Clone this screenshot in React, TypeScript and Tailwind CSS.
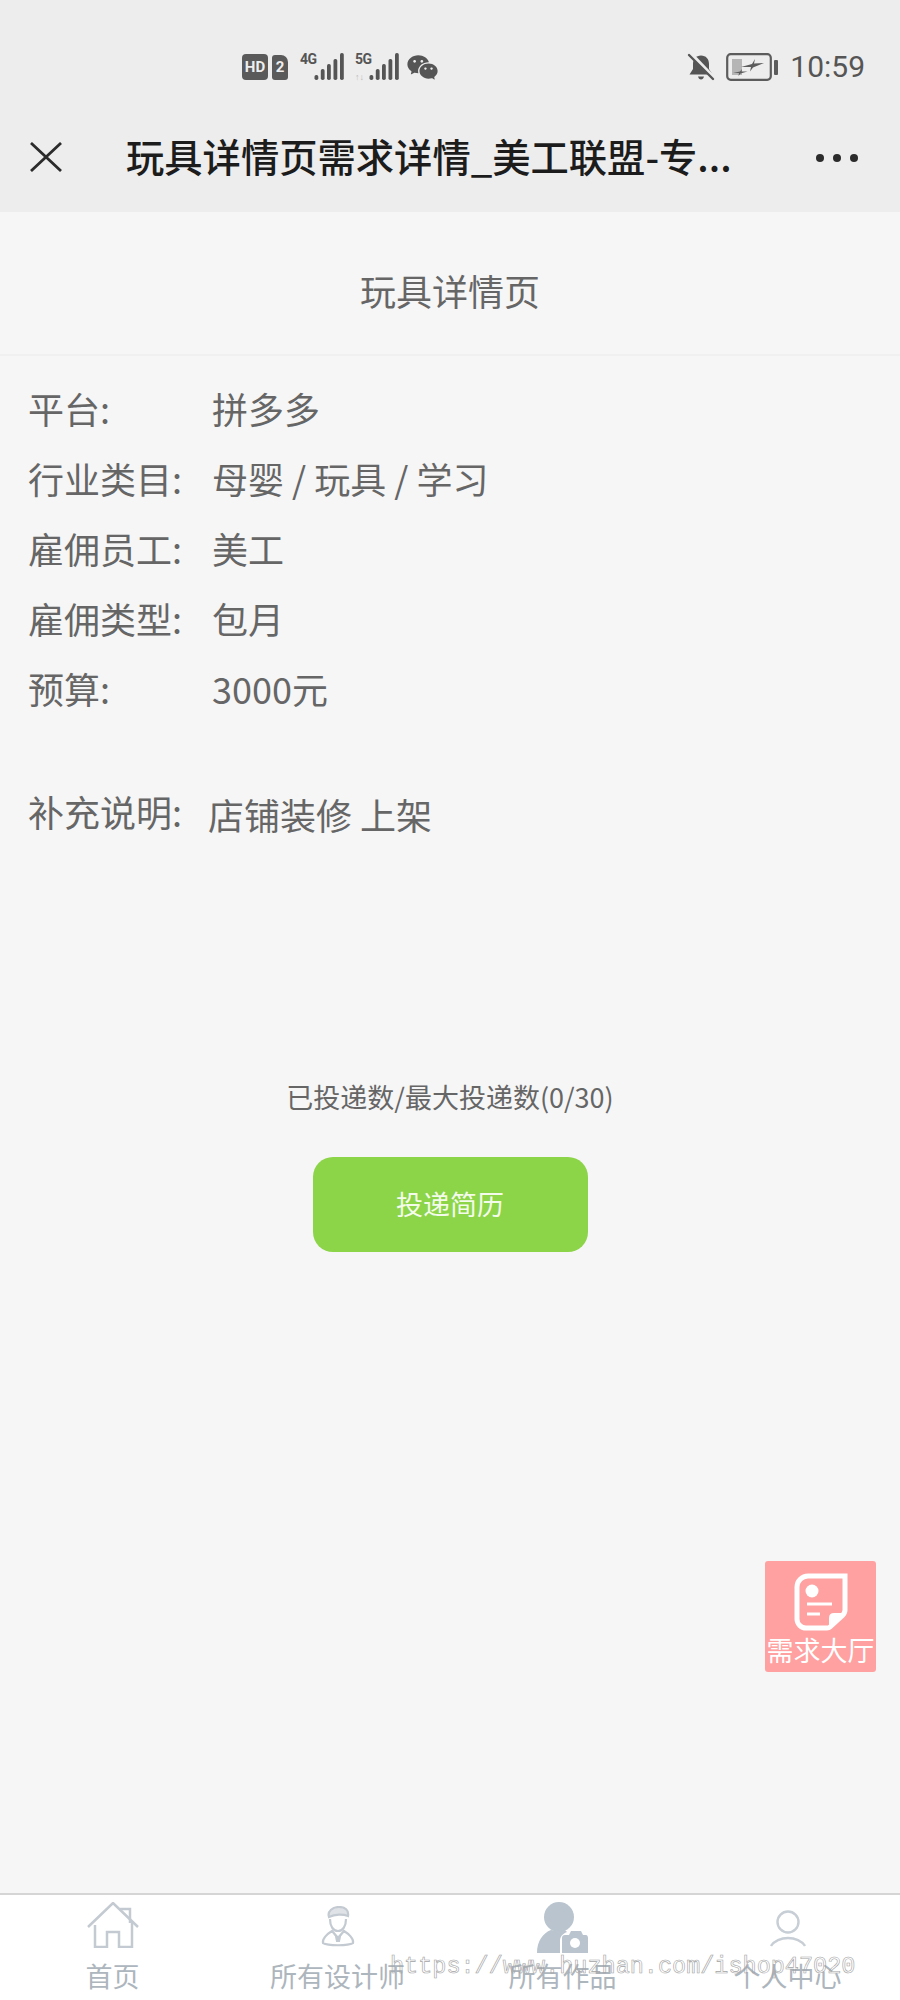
import { RiWechatFill } from "react-icons/ri";

const cjk = "font-['Noto_Sans_CJK_SC','Noto_Sans',sans-serif]";

const rows = [
  { label: "平台:", value: "拼多多" },
  { label: "行业类目:", value: "母婴 / 玩具 / 学习" },
  { label: "雇佣员工:", value: "美工" },
  { label: "雇佣类型:", value: "包月" },
  { label: "预算:", value: "3000元" },
];

function Signal({ tag, arrows }: { tag: string; arrows?: boolean }) {
  return (
    <div className="relative h-[28px] w-[44px]">
      <span className="absolute left-0 top-[-2px] font-['Roboto',sans-serif] text-[14px] font-bold leading-[16px] tracking-[-0.5px] text-[#555]">
        {tag}
      </span>
      {arrows && <span className="absolute bottom-[-1px] left-0 font-['Roboto',sans-serif] text-[9px] font-bold leading-[10px] text-[#bbb]">↑↓</span>}
      <svg className="absolute right-0 top-0" width="30" height="28" viewBox="0 0 30 28" fill="#555">
        <rect x="0.500" y="22" width="3.800" height="5" rx="1.700" />
        <rect x="6.800" y="16" width="3.800" height="11" rx="1.700" />
        <rect x="13" y="11" width="3.800" height="16" rx="1.700" />
        <rect x="19.500" y="6" width="3.800" height="21" rx="1.700" />
        <rect x="26" y="0" width="3.800" height="27" rx="1.700" />
      </svg>
    </div>
  );
}

function StatusBar() {
  return (
    <div className="flex h-[102px] items-center pl-[242px] pr-[35px] pt-[32px] text-[#555]">
      <div className="flex h-[26px] w-[26px] items-center justify-center rounded-[4px] bg-[#5a5a5a] font-['Roboto',sans-serif] text-[15px] font-bold leading-none text-[#eee]">
        HD
      </div>
      <div className="ml-[4px] flex h-[25px] w-[16px] items-center justify-center rounded-[3px] rounded-tr-[7px] bg-[#5a5a5a] font-['Roboto',sans-serif] text-[15px] font-bold leading-none text-[#eee]">
        2
      </div>
      <div className="ml-[12px]">
        <Signal tag="4G" />
      </div>
      <div className="ml-[11px]">
        <Signal tag="5G" arrows />
      </div>
      <RiWechatFill className="ml-[7px] text-[#555]" size={33} />
      <svg className="ml-auto" width="28" height="28" viewBox="0 0 28 28">
        <path d="M14 2.500c-5 0-8 3.500-8 8.500v5L2.500 21.500h23L22 16v-5c0-5-3-8.500-8-8.500z" fill="#555" />
        <path d="M11 23.500c.5 2 1.500 3 3 3s2.500-1 3-3z" fill="#555" />
        <path d="M3 0l24 25" stroke="#ededed" strokeWidth="4" />
        <path d="M2 2l24 24" stroke="#555" strokeWidth="2.400" strokeLinecap="round" />
      </svg>
      <div className="ml-[11px] flex items-center">
        <svg width="46" height="28" viewBox="0 0 46 28">
          <rect x="1.200" y="1.200" width="43.600" height="25.600" rx="3.500" fill="none" stroke="#5c5c5c" strokeWidth="2.200" />
          <rect x="6" y="6" width="10" height="16" fill="#b5b5b5" />
          <path d="M15 14l11-3 3-5-1 4.500 10-.5-11 4.500-3 4 1-4.500z" fill="#5c5c5c" />
          <path d="M7 20l7-1.500 2-2.500-.5 2.500 6 0-7 2-2 2.500.5-3z" fill="#5c5c5c" />
        </svg>
        <span className="ml-[2px] h-[15px] w-[4px] rounded-[1px] bg-[#5c5c5c]" />
      </div>
      <span className="ml-[12px] font-['Roboto',sans-serif] text-[30px] leading-[34px] text-[#555]">10:59</span>
    </div>
  );
}

function NavBar() {
  return (
    <div className="flex h-[110px] items-start pt-[34px]">
      <svg className="ml-[30px] mt-[6px]" width="32" height="30" viewBox="0 0 32 30" fill="none" stroke="#2b2b2b" strokeWidth="2.800">
        <path d="M1 1l30 28M31 1L1 29" />
      </svg>
      <div className={`ml-[64px] text-[38.300px] font-medium leading-[40px] text-[#1c1c1c] ${cjk}`}>
        玩具详情页需求详情_美工联盟-专...
      </div>
      <div className="ml-auto mr-[42px] mt-[18px] flex gap-[9px]">
        <span className="h-[8px] w-[8px] rounded-full bg-[#2b2b2b]" />
        <span className="h-[8px] w-[8px] rounded-full bg-[#2b2b2b]" />
        <span className="h-[8px] w-[8px] rounded-full bg-[#2b2b2b]" />
      </div>
    </div>
  );
}

function TabBar() {
  const tabs = [
    {
      label: "首页",
      offset: "pb-[9px]",
      icon: (
        <svg width="52" height="46" viewBox="0 0 52 46" fill="none" stroke="#c3cad1" strokeWidth="2.500">
          <path d="M1 25L26 1l25 24" />
          <path d="M33 7h10v14" />
          <path d="M8 23v22h12V30h12v15h13V19" />
        </svg>
      ),
    },
    {
      label: "所有设计师",
      offset: "pb-[10px]",
      icon: (
        <svg width="34" height="41" viewBox="0 0 34 41" fill="none" stroke="#c3cad1" strokeWidth="2.200">
          <path d="M8 11C6 5 12 1 18 1c6 0 10 3 9 9-5-2-13-2-19 1z" fill="#dfe3e7" />
          <path d="M9 13c0 7 3 12 8 12s8-5 8-12" />
          <path d="M11 25C6 28 1 33 2 37c5 3 25 3 30 0 1-4-4-9-9-12l-6 7z" />
          <path d="M15 30l2 2 2-2-1 5h-2z" fill="#c3cad1" />
        </svg>
      ),
    },
    {
      label: "所有作品",
      offset: "pb-[3px]",
      icon: (
        <svg width="52" height="52" viewBox="0 0 52 52">
          <circle cx="22" cy="15" r="15" fill="#b9c4ce" />
          <path d="M0 51c0-12 6-20 14-23 5 1 9 1 14 0l2 2c-5 2-7 5-7 9v12z" fill="#b9c4ce" />
          <path d="M25 36c0-2 1-3 3-3h4l2-4h10l2 4h3c1 0 2 1 2 3v15H25z" fill="#b9c4ce" />
          <circle cx="38" cy="41" r="5" fill="#fff" />
        </svg>
      ),
    },
    {
      label: "个人中心",
      offset: "pb-[9px]",
      icon: (
        <svg width="36" height="38" viewBox="0 0 36 38" fill="none" stroke="#c7ced5" strokeWidth="2.400">
          <circle cx="18" cy="12" r="10.500" />
          <path d="M1 36c3-5 10-8 17-8s14 3 17 8" />
        </svg>
      ),
    },
  ];

  return (
    <div className="mt-auto grid h-[107px] grid-cols-4 border-t-2 border-[#d5d5d5] bg-white">
      {tabs.map((t) => (
        <div key={t.label} className="flex flex-col items-center">
          <div className={`flex h-[62px] items-end ${t.offset}`}>{t.icon}</div>
          <div className={`mt-[1px] text-[27px] leading-[36px] text-[#adb5bd] ${cjk}`}>{t.label}</div>
        </div>
      ))}
    </div>
  );
}

export default function App() {
  return (
    <div className={`relative flex h-[2000px] w-[900px] flex-col overflow-hidden bg-[#f6f6f6] ${cjk}`}>
      <div className="bg-[#ededed]">
        <StatusBar />
        <NavBar />
      </div>

      <div className="flex h-[144px] items-center justify-center border-b-2 border-[#f0f0f0] pt-[14px] text-[36px] leading-[44px] text-[#666]">
        玩具详情页
      </div>

      <div className="flex flex-col gap-[20px] pl-[28px] pt-[27px] text-[36px] leading-[50px] text-[#666]">
        {rows.map((r) => (
          <div key={r.label} className="flex">
            <div className="w-[184px]">{r.label}</div>
            <div>{r.value}</div>
          </div>
        ))}
      </div>

      <div className="mt-[73px] flex pl-[28px] text-[36px] leading-[50px] text-[#666]">
        <div className="w-[180px]">补充说明:</div>
        <div className="mt-[3px]">店铺装修 上架</div>
      </div>

      <div className="mt-[240px] text-center text-[27px] leading-[36px] text-[#666]">已投递数/最大投递数(0/30)</div>

      <button className="mx-auto mt-[42px] flex h-[95px] w-[275px] items-center justify-center rounded-[20px] bg-[#8cd448] text-[27px] text-[#f4fbea]">
        投递简历
      </button>

      <TabBar />

      {/* floating entry */}
      <div className="absolute left-[765px] top-[1561px] flex h-[111px] w-[111px] flex-col items-center rounded-[3px] bg-[#ffa1a1] pt-[12px] text-white">
        <svg width="54" height="58" viewBox="0 0 54 58" fill="none" stroke="#fff">
          <path d="M14 3h37v34c0 2-1 4-3 6L36 54c-1 1-2 1-3 1H12c-5 0-9-4-9-9V14C3 8 8 3 14 3z" strokeWidth="5" />
          <circle cx="18" cy="18" r="6.500" fill="#fff" stroke="none" />
          <path d="M13 31h25M13 41h13" strokeWidth="2.800" />
          <path d="M50 41H40c-3 0-4 2-4 4v9z" fill="#fff" strokeWidth="2" />
        </svg>
        <div className="mt-[1px] whitespace-nowrap text-[27px] leading-[36px]">需求大厅</div>
      </div>

      {/* site watermark */}
      <div className="absolute left-[390px] top-[1952px] whitespace-nowrap font-['Liberation_Mono',monospace] text-[23.500px] leading-[30px] text-transparent [-webkit-text-stroke:0.6px_#a3a3a3]">
        https://www.huzhan.com/ishop47020
      </div>
    </div>
  );
}
